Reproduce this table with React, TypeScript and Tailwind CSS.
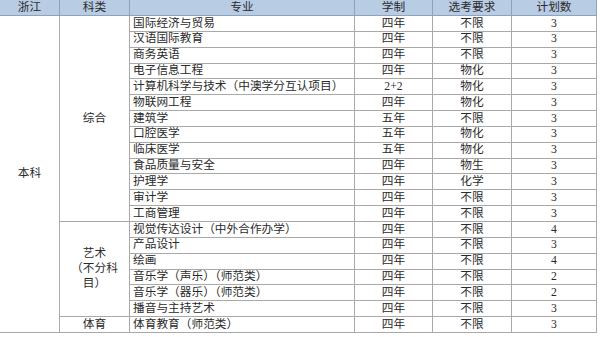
import { Fragment } from 'react';

type Row = { major: string; years: string; req: string; plan: string };

const zonghe: Row[] = [
  { major: '国际经济与贸易', years: '四年', req: '不限', plan: '3' },
  { major: '汉语国际教育', years: '四年', req: '不限', plan: '3' },
  { major: '商务英语', years: '四年', req: '不限', plan: '3' },
  { major: '电子信息工程', years: '四年', req: '物化', plan: '3' },
  { major: '计算机科学与技术（中澳学分互认项目）', years: '2+2', req: '物化', plan: '3' },
  { major: '物联网工程', years: '四年', req: '物化', plan: '3' },
  { major: '建筑学', years: '五年', req: '不限', plan: '3' },
  { major: '口腔医学', years: '五年', req: '物化', plan: '3' },
  { major: '临床医学', years: '五年', req: '物化', plan: '3' },
  { major: '食品质量与安全', years: '四年', req: '物生', plan: '3' },
  { major: '护理学', years: '四年', req: '化学', plan: '3' },
  { major: '审计学', years: '四年', req: '不限', plan: '3' },
  { major: '工商管理', years: '四年', req: '不限', plan: '3' },
];

const yishu: Row[] = [
  { major: '视觉传达设计（中外合作办学）', years: '四年', req: '不限', plan: '4' },
  { major: '产品设计', years: '四年', req: '不限', plan: '3' },
  { major: '绘画', years: '四年', req: '不限', plan: '4' },
  { major: '音乐学（声乐）（师范类）', years: '四年', req: '不限', plan: '2' },
  { major: '音乐学（器乐）（师范类）', years: '四年', req: '不限', plan: '2' },
  { major: '播音与主持艺术', years: '四年', req: '不限', plan: '3' },
];

const tiyu: Row[] = [
  { major: '体育教育（师范类）', years: '四年', req: '不限', plan: '3' },
];

const cell = 'border-r border-b border-[#a9a9a9] flex items-center';

const DataCells = ({ r }: { r: Row }) => (
  <>
    <div className={`${cell} pl-[3px] whitespace-nowrap overflow-hidden`}>{r.major}</div>
    <div className={`${cell} justify-center`}>{r.years}</div>
    <div className={`${cell} justify-center`}>{r.req}</div>
    <div className={`${cell} justify-center`}>{r.plan}</div>
  </>
);

const App = () => {
  return (
    <div
      className="w-[600px] h-[337px] bg-white text-[#2a2a2a] text-[11.7px] leading-none"
      style={{ fontFamily: '"Liberation Serif", "Noto Sans CJK SC", serif' }}
    >
      <div className="grid w-[597px] grid-cols-[60px_70px_225px_78px_79px_85px] grid-rows-[16px_repeat(20,15.85px)]">
        {['浙江', '科类', '专业', '学制', '选考要求', '计划数'].map(h => (
          <div key={h} className="bg-[#b8cce4] border-r border-b border-[#8da2bd] flex items-center justify-center">
            {h}
          </div>
        ))}

        <div className={`${cell} row-span-20 justify-center`}>本科</div>

        <div className={`${cell} row-span-13 justify-center`}>综合</div>
        {zonghe.map((r, i) => (
          <Fragment key={'z' + i}>
            <DataCells r={r} />
          </Fragment>
        ))}

        <div className={`${cell} row-span-6 flex-col justify-center gap-[3px] text-center`}>
          <span>艺术</span>
          <span>（不分科</span>
          <span>目）</span>
        </div>
        {yishu.map((r, i) => (
          <Fragment key={'y' + i}>
            <DataCells r={r} />
          </Fragment>
        ))}

        <div className={`${cell} justify-center`}>体育</div>
        {tiyu.map((r, i) => (
          <Fragment key={'t' + i}>
            <DataCells r={r} />
          </Fragment>
        ))}
      </div>
    </div>
  );
};

export default App;
